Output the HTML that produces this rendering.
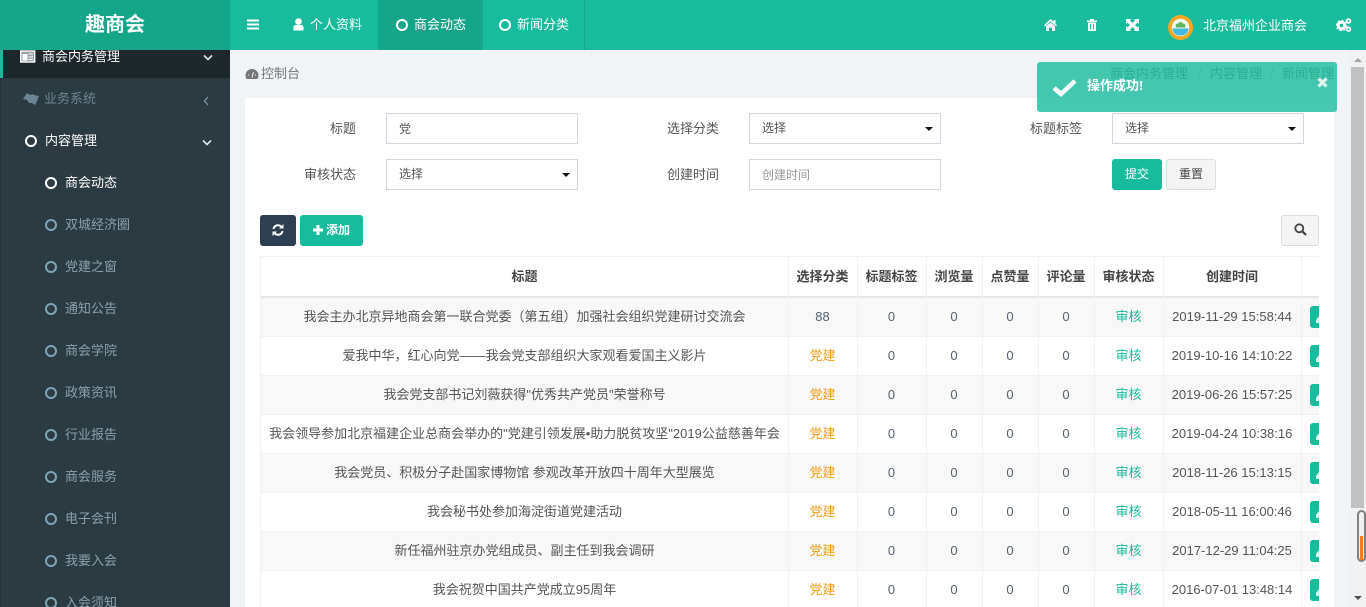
<!DOCTYPE html>
<html lang="zh"><head><meta charset="utf-8"><title>趣商会</title>
<style>
*{box-sizing:border-box}
html,body{margin:0;padding:0;width:1366px;height:607px;overflow:hidden;background:#f0f4f7}
body{font:13px/20px "Liberation Sans","WenQuanYi Zen Hei","Noto Sans CJK SC",sans-serif;color:#444c54;position:relative}
.a{position:absolute;white-space:nowrap}
.c{text-align:center}
.inp{position:absolute;background:#fff;border:1px solid #d2d6de;height:31px;padding-left:12px;line-height:28px;color:#555;font-size:12px}
.arr{position:absolute;right:7px;top:13px;width:0;height:0;border:4px solid transparent;border-top:4px solid #111;border-bottom:0}
.lb{position:absolute;text-align:right;line-height:20px;color:#555;white-space:nowrap}
.btn{position:absolute;border-radius:3px;height:31px;line-height:30px;text-align:center;color:#fff;background:#18bc9c}
.ring{position:absolute;width:12px;height:12px;border:2.5px solid #fff;border-radius:50%}
.menu{position:absolute;left:65px;color:#8aa0ac;line-height:20px;white-space:nowrap}
.r{position:absolute;left:45px;border-color:#7fa3b5}
.vl{position:absolute;top:257px;width:1px;height:350px;background:#f1f1f1}
.row{position:absolute;left:261px;width:1058px;height:39px;border-bottom:1px solid #f1f1f1}
.row.o{background:#f8f8f8}
.t{position:absolute;left:0;width:527px;text-align:center;top:9px;color:#555;white-space:nowrap}
.n{position:absolute;top:9px;text-align:center;color:#56626e}
.ed{position:absolute;left:1049px;top:8px;width:9px;height:22px;background:#18bc9c;border-radius:3px 0 0 3px}
.ed:after{content:"";position:absolute;left:6px;top:10px;width:3px;height:7px;background:#d5f2ec;clip-path:polygon(100% 0,100% 100%,0 100%,0 55%)}
</style></head><body>

<!-- sidebar -->
<div class="a" style="left:0;top:0;width:230px;height:607px;background:#2c3b41"></div>
<div class="a" style="left:0;top:50px;width:1px;height:557px;background:#263238"></div>
<div class="a" style="left:0;top:50px;width:230px;height:28px;background:#1e282c"></div>
<div class="a" style="left:0;top:50px;width:3px;height:28px;background:#18bc9c"></div>
<svg class="a" style="left:18px;top:50px" width="18" height="14" viewBox="0 0 18 14"><rect x="2.700" y="1" width="14" height="11" fill="#9aa3a6" stroke="#fff" stroke-width="1.400"/><rect x="4.500" y="4" width="5" height="6.500" fill="#fff"/><path d="M10.500 4h4.500M10.500 7h4.500M10.500 9.500h4.500" stroke="#fff"/></svg>
<div class="a" style="left:42px;top:47px;color:#fff">商会内务管理</div>
<svg class="a" style="left:203px;top:54px" width="10" height="8"><path d="M1 1.500l4 4 4-4" fill="none" stroke="#dfe6e8" stroke-width="1.600"/></svg>

<svg class="a" style="left:22px;top:92px" width="18" height="14" viewBox="0 0 18 14"><path d="M1 7L5 1l3 2 3-1 1 1 5 1-2 5-2 4-3-2-3 0-2-3z" fill="#6d8590"/></svg>
<div class="a" style="left:44px;top:89px;color:#6d8590">业务系统</div>
<svg class="a" style="left:203px;top:96px" width="7" height="10"><path d="M5 1L1.500 5 5 9" fill="none" stroke="#7f95a0" stroke-width="1.300"/></svg>

<div class="ring" style="left:25px;top:135px"></div>
<div class="a" style="left:45px;top:131px;color:#fff">内容管理</div>
<svg class="a" style="left:202px;top:139px" width="10" height="8"><path d="M1 1.500l4 4 4-4" fill="none" stroke="#dfe6e8" stroke-width="1.600"/></svg>

<div class="ring" style="left:45px;top:177px"></div>
<div class="menu" style="top:173px;color:#fff">商会动态</div>
<div class="ring r" style="top:219px"></div><div class="menu" style="top:215px">双城经济圈</div>
<div class="ring r" style="top:261px"></div><div class="menu" style="top:257px">党建之窗</div>
<div class="ring r" style="top:303px"></div><div class="menu" style="top:299px">通知公告</div>
<div class="ring r" style="top:345px"></div><div class="menu" style="top:341px">商会学院</div>
<div class="ring r" style="top:387px"></div><div class="menu" style="top:383px">政策资讯</div>
<div class="ring r" style="top:429px"></div><div class="menu" style="top:425px">行业报告</div>
<div class="ring r" style="top:471px"></div><div class="menu" style="top:467px">商会服务</div>
<div class="ring r" style="top:513px"></div><div class="menu" style="top:509px">电子会刊</div>
<div class="ring r" style="top:555px"></div><div class="menu" style="top:551px">我要入会</div>
<div class="ring r" style="top:597px"></div><div class="menu" style="top:593px">入会须知</div>

<!-- header -->
<div class="a" style="left:0;top:0;width:1366px;height:50px;background:#18bc9c"></div>
<div class="a c" style="left:0;top:0;width:230px;height:50px;background:#15a589;color:#fff;font-size:20px;font-weight:bold;line-height:50px">趣商会</div>
<div class="a" style="left:378px;top:0;width:104px;height:50px;background:#15a589"></div>
<div class="a" style="left:482px;top:0;width:1px;height:50px;background:#15a98c"></div>
<div class="a" style="left:584px;top:0;width:1px;height:50px;background:#15a98c"></div>
<svg class="a" style="left:247px;top:19px" width="12" height="11"><path d="M0 1.500h12M0 5.500h12M0 9.500h12" stroke="#fff" stroke-width="2"/></svg>
<svg class="a" style="left:293px;top:18px" width="11" height="13" viewBox="0 0 11 13"><circle cx="5.500" cy="3.500" r="3.300" fill="#fff"/><path d="M0.500 12.500V9.500Q0.500 7 3 7h5Q10.500 7 10.500 9.500v3z" fill="#fff"/></svg>
<div class="a" style="left:310px;top:15px;color:#fff">个人资料</div>
<div class="ring" style="left:396px;top:19px"></div>
<div class="a" style="left:414px;top:15px;color:#fff">商会动态</div>
<div class="ring" style="left:499px;top:19px"></div>
<div class="a" style="left:517px;top:15px;color:#fff">新闻分类</div>

<svg class="a" style="left:1044px;top:19px" width="13" height="12" viewBox="0 0 13 12"><path d="M0 6.200L6.500 0 9.500 2.900V1h2v3.800L13 6.200 12 7.400 6.500 2.400 1 7.400z" fill="#fff"/><path d="M2 7.300L6.500 3.400 11 7.300V12H8V8.500H5V12H2z" fill="#fff"/></svg>
<svg class="a" style="left:1087px;top:19px" width="10" height="12" viewBox="0 0 10 12"><path d="M0 1.500h10v1.500H0zM3 0h4v1.500H3zM1 3.500h8V12H1z" fill="#fff"/><path d="M3.500 5v5.500M6.500 5v5.500" stroke="#18bc9c"/></svg>
<svg class="a" style="left:1126px;top:19px" width="13" height="12" viewBox="0 0 13 12"><path d="M0 0h5.200L3.800 1.400 6.500 4 9.200 1.400 7.800 0H13v5L11.500 3.600 9 6l2.500 2.400L13 7v5H7.800L9.200 10.600 6.500 8 3.800 10.600 5.200 12H0V7L1.500 8.400 4 6 1.500 3.600 0 5z" fill="#fff"/></svg>
<svg class="a" style="left:1168px;top:15px" width="25" height="25" viewBox="0 0 25 25"><circle cx="12.500" cy="12.500" r="12.500" fill="#f5a623"/><circle cx="12.500" cy="12.500" r="8.800" fill="#eef6ee"/><path d="M8 12.500q-1-4 2-4 2.500-3 5 0 3 0 2 4z" fill="#5fb35a"/><path d="M4.500 13.500h16q-1 7-8 7t-8-7z" fill="#45b8e0"/></svg>
<div class="a" style="left:1203px;top:16px;color:#fff">北京福州企业商会</div>
<svg class="a" style="left:1336px;top:18px" width="16" height="14" viewBox="0 0 16 14"><circle cx="5.500" cy="7.500" r="3.300" fill="none" stroke="#fff" stroke-width="3"/><circle cx="5.500" cy="7.500" r="5" fill="none" stroke="#fff" stroke-width="1.500" stroke-dasharray="2 1.900"/><circle cx="12.500" cy="3" r="1.900" fill="none" stroke="#fff" stroke-width="1.800"/><circle cx="12.500" cy="11.200" r="1.900" fill="none" stroke="#fff" stroke-width="1.800"/></svg>

<!-- breadcrumb -->
<svg class="a" style="left:245px;top:68px" width="14" height="12" viewBox="0 0 14 12"><path d="M7 1a6.500 6.500 0 0 0-6.500 6.500c0 1.500.5 3 1.300 3.500h10.400c.8-.5 1.300-2 1.300-3.500A6.500 6.500 0 0 0 7 1z" fill="#777"/><path d="M7 9.500L8.500 4M3 7h1M10 7h1" stroke="#f0f4f7"/></svg>
<div class="a" style="left:261px;top:64px;color:#777">控制台</div>
<div class="a" style="left:1110px;top:64px;color:#777">商会内务管理</div>
<div class="a" style="left:1198px;top:64px;color:#bbb">/</div>
<div class="a" style="left:1210px;top:64px;color:#777">内容管理</div>
<div class="a" style="left:1270px;top:64px;color:#bbb">/</div>
<div class="a" style="left:1282px;top:64px;color:#777">新闻管理</div>

<!-- panel -->
<div class="a" style="left:245px;top:98px;width:1089px;height:509px;background:#fff;border-radius:3px 3px 0 0"></div>

<div class="lb" style="left:300px;width:56px;top:119px">标题</div>
<div class="inp" style="left:386px;top:113px;width:192px;line-height:31px">党</div>
<div class="lb" style="left:640px;width:79px;top:119px">选择分类</div>
<div class="inp" style="left:749px;top:113px;width:192px">选择<i class="arr"></i></div>
<div class="lb" style="left:1003px;width:79px;top:119px">标题标签</div>
<div class="inp" style="left:1112px;top:113px;width:192px">选择<i class="arr"></i></div>
<div class="lb" style="left:277px;width:79px;top:165px">审核状态</div>
<div class="inp" style="left:386px;top:159px;width:192px">选择<i class="arr"></i></div>
<div class="lb" style="left:640px;width:79px;top:165px">创建时间</div>
<div class="inp" style="left:749px;top:159px;width:192px;color:#999;line-height:30px">创建时间</div>
<div class="btn" style="left:1112px;top:159px;width:50px;font-size:12px">提交</div>
<div class="btn" style="left:1166px;top:159px;width:50px;background:#f4f4f4;border:1px solid #ddd;color:#444;line-height:28px;font-size:12px">重置</div>

<div class="btn" style="left:260px;top:215px;width:36px;background:#2c3e50"><svg style="position:absolute;left:12px;top:9px" width="12" height="12" viewBox="0 0 12 12"><path d="M1.500 5A4.500 4.500 0 0 1 9.500 3M10.500 7A4.500 4.500 0 0 1 2.500 9" fill="none" stroke="#fff" stroke-width="2"/><path d="M11.500 0v4.500H7zM.500 12V7.500H5z" fill="#fff"/></svg></div>
<div class="btn" style="left:300px;top:215px;width:63px"><svg style="position:absolute;left:13px;top:10px" width="10" height="10"><path d="M5 0v10M0 5h10" stroke="#fff" stroke-width="3"/></svg><span style="position:absolute;left:26px;top:0;font-size:12px;font-weight:bold">添加</span></div>
<div class="btn" style="left:1281px;top:215px;width:38px;background:#f4f4f4;border:1px solid #ddd"><svg style="position:absolute;left:12px;top:7px" width="13" height="13" viewBox="0 0 13 13"><circle cx="5.300" cy="5.300" r="4" fill="none" stroke="#444" stroke-width="1.800"/><path d="M8.300 8.300L12 12" stroke="#444" stroke-width="2.200"/></svg></div>

<!-- table -->
<div class="a" style="left:260px;top:256px;width:1059px;height:1px;background:#f1f1f1"></div>
<div class="a" style="left:261px;top:296px;width:1058px;height:2px;background:#e6e6e6"></div>
<div class="row o" style="top:298px"><div class="t">我会主办北京异地商会第一联合党委（第五组）加强社会组织党建研讨交流会</div><div class="n" style="left:527px;width:69px">88</div><div class="n" style="left:596px;width:69px">0</div><div class="n" style="left:665px;width:56px">0</div><div class="n" style="left:721px;width:56px">0</div><div class="n" style="left:777px;width:56px">0</div><div class="n" style="left:833px;width:69px;color:#18bc9c">审核</div><div class="n" style="left:902px;width:138px;color:#555">2019-11-29 15:58:44</div><i class="ed"></i></div>
<div class="row" style="top:337px"><div class="t">爱我中华，红心向党——我会党支部组织大家观看爱国主义影片</div><div class="n" style="left:527px;width:69px;color:#f39c12">党建</div><div class="n" style="left:596px;width:69px">0</div><div class="n" style="left:665px;width:56px">0</div><div class="n" style="left:721px;width:56px">0</div><div class="n" style="left:777px;width:56px">0</div><div class="n" style="left:833px;width:69px;color:#18bc9c">审核</div><div class="n" style="left:902px;width:138px;color:#555">2019-10-16 14:10:22</div><i class="ed"></i></div>
<div class="row o" style="top:376px"><div class="t">我会党支部书记刘薇获得"优秀共产党员"荣誉称号</div><div class="n" style="left:527px;width:69px;color:#f39c12">党建</div><div class="n" style="left:596px;width:69px">0</div><div class="n" style="left:665px;width:56px">0</div><div class="n" style="left:721px;width:56px">0</div><div class="n" style="left:777px;width:56px">0</div><div class="n" style="left:833px;width:69px;color:#18bc9c">审核</div><div class="n" style="left:902px;width:138px;color:#555">2019-06-26 15:57:25</div><i class="ed"></i></div>
<div class="row" style="top:415px"><div class="t">我会领导参加北京福建企业总商会举办的"党建引领发展•助力脱贫攻坚"2019公益慈善年会</div><div class="n" style="left:527px;width:69px;color:#f39c12">党建</div><div class="n" style="left:596px;width:69px">0</div><div class="n" style="left:665px;width:56px">0</div><div class="n" style="left:721px;width:56px">0</div><div class="n" style="left:777px;width:56px">0</div><div class="n" style="left:833px;width:69px;color:#18bc9c">审核</div><div class="n" style="left:902px;width:138px;color:#555">2019-04-24 10:38:16</div><i class="ed"></i></div>
<div class="row o" style="top:454px"><div class="t">我会党员、积极分子赴国家博物馆 参观改革开放四十周年大型展览</div><div class="n" style="left:527px;width:69px;color:#f39c12">党建</div><div class="n" style="left:596px;width:69px">0</div><div class="n" style="left:665px;width:56px">0</div><div class="n" style="left:721px;width:56px">0</div><div class="n" style="left:777px;width:56px">0</div><div class="n" style="left:833px;width:69px;color:#18bc9c">审核</div><div class="n" style="left:902px;width:138px;color:#555">2018-11-26 15:13:15</div><i class="ed"></i></div>
<div class="row" style="top:493px"><div class="t">我会秘书处参加海淀街道党建活动</div><div class="n" style="left:527px;width:69px;color:#f39c12">党建</div><div class="n" style="left:596px;width:69px">0</div><div class="n" style="left:665px;width:56px">0</div><div class="n" style="left:721px;width:56px">0</div><div class="n" style="left:777px;width:56px">0</div><div class="n" style="left:833px;width:69px;color:#18bc9c">审核</div><div class="n" style="left:902px;width:138px;color:#555">2018-05-11 16:00:46</div><i class="ed"></i></div>
<div class="row o" style="top:532px"><div class="t">新任福州驻京办党组成员、副主任到我会调研</div><div class="n" style="left:527px;width:69px;color:#f39c12">党建</div><div class="n" style="left:596px;width:69px">0</div><div class="n" style="left:665px;width:56px">0</div><div class="n" style="left:721px;width:56px">0</div><div class="n" style="left:777px;width:56px">0</div><div class="n" style="left:833px;width:69px;color:#18bc9c">审核</div><div class="n" style="left:902px;width:138px;color:#555">2017-12-29 11:04:25</div><i class="ed"></i></div>
<div class="row" style="top:571px"><div class="t">我会祝贺中国共产党成立95周年</div><div class="n" style="left:527px;width:69px;color:#f39c12">党建</div><div class="n" style="left:596px;width:69px">0</div><div class="n" style="left:665px;width:56px">0</div><div class="n" style="left:721px;width:56px">0</div><div class="n" style="left:777px;width:56px">0</div><div class="n" style="left:833px;width:69px;color:#18bc9c">审核</div><div class="n" style="left:902px;width:138px;color:#555">2016-07-01 13:48:14</div><i class="ed"></i></div>

<div class="vl" style="left:260px"></div><div class="vl" style="left:788px"></div><div class="vl" style="left:857px"></div><div class="vl" style="left:926px"></div><div class="vl" style="left:982px"></div><div class="vl" style="left:1038px"></div><div class="vl" style="left:1094px"></div><div class="vl" style="left:1163px"></div><div class="vl" style="left:1301px"></div>

<div class="a c" style="left:261px;top:267px;width:527px;font-weight:bold;color:#444">标题</div>
<div class="a c" style="left:788px;top:267px;width:69px;font-weight:bold;color:#444">选择分类</div>
<div class="a c" style="left:857px;top:267px;width:69px;font-weight:bold;color:#444">标题标签</div>
<div class="a c" style="left:926px;top:267px;width:56px;font-weight:bold;color:#444">浏览量</div>
<div class="a c" style="left:982px;top:267px;width:56px;font-weight:bold;color:#444">点赞量</div>
<div class="a c" style="left:1038px;top:267px;width:56px;font-weight:bold;color:#444">评论量</div>
<div class="a c" style="left:1094px;top:267px;width:69px;font-weight:bold;color:#444">审核状态</div>
<div class="a c" style="left:1163px;top:267px;width:138px;font-weight:bold;color:#444">创建时间</div>

<!-- toast -->
<div class="a" style="left:1037px;top:62px;width:300px;height:50px;background:rgba(24,188,156,.8);border-radius:3px"></div>
<svg class="a" style="left:1052px;top:78px" width="25" height="19" viewBox="0 0 25 19"><path d="M2 10l7 6L23 3" fill="none" stroke="#fff" stroke-width="4.500"/></svg>
<div class="a" style="left:1087px;top:76px;color:#fff;font-weight:bold">操作成功!</div>
<svg class="a" style="left:1317px;top:77px" width="11" height="11"><path d="M1.500 1.500l8 8M9.500 1.500l-8 8" stroke="#dff5f0" stroke-width="3.200"/></svg>

<!-- scrollbar -->
<div class="a" style="left:1349px;top:50px;width:17px;height:557px;background:#f1f1f1"></div>
<div class="a" style="left:1351px;top:67px;width:13px;height:441px;background:#c1c1c1"></div>
<div class="a" style="left:1354px;top:58px;width:0;height:0;border:4px solid transparent;border-bottom:4px solid #a3a3a3;border-top:0"></div>
<div class="a" style="left:1354px;top:596px;width:0;height:0;border:4px solid transparent;border-top:4px solid #505050;border-bottom:0"></div>
<div class="a" style="left:1357px;top:510px;width:9px;height:52px;border:2px solid #808080;border-radius:5px;background:#f1f1f1"></div>
<div class="a" style="left:1360px;top:536px;width:3px;height:24px;background:#f57c1f"></div>
</body></html>
